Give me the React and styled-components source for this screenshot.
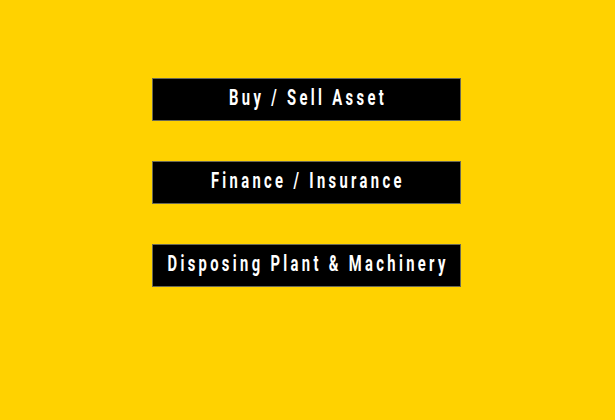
import React from 'react'
import styled, { createGlobalStyle } from 'styled-components'

const GlobalStyle = createGlobalStyle`
  html, body {
    margin: 0;
    padding: 0;
    background: #ffd200;
  }
`

const Page = styled.main`
  width: 615px;
  height: 420px;
  background: #ffd200;
  display: flex;
  flex-direction: column;
  align-items: flex-start;
  padding: 78px 0 0 152px;
  box-sizing: border-box;
  gap: 40px;
`

const MenuButton = styled.button`
  width: 309px;
  height: 43px;
  box-sizing: border-box;
  background: #000;
  border: 1px solid #6b6a55;
  color: #fff;
  display: flex;
  align-items: center;
  justify-content: center;
  padding: 0;
  overflow: visible;
  cursor: pointer;
`

// condensed display face: squeeze a regular sans horizontally
const Label = styled.span`
  display: inline-block;
  font-family: "Roboto", "DejaVu Sans", sans-serif;
  font-weight: bold;
  font-size: 22px;
  line-height: 1;
  letter-spacing: 5px;
  padding-left: 5px;
  margin-top: -3px;
  white-space: nowrap;
  transform: scaleX(0.67);
`

const items = ['Buy / Sell Asset', 'Finance / Insurance', 'Disposing Plant & Machinery']

export default function App() {
  return (
    <>
      <GlobalStyle />
      <Page>
        {items.map((label) => (
          <MenuButton key={label}>
            <Label>{label}</Label>
          </MenuButton>
        ))}
      </Page>
    </>
  )
}
